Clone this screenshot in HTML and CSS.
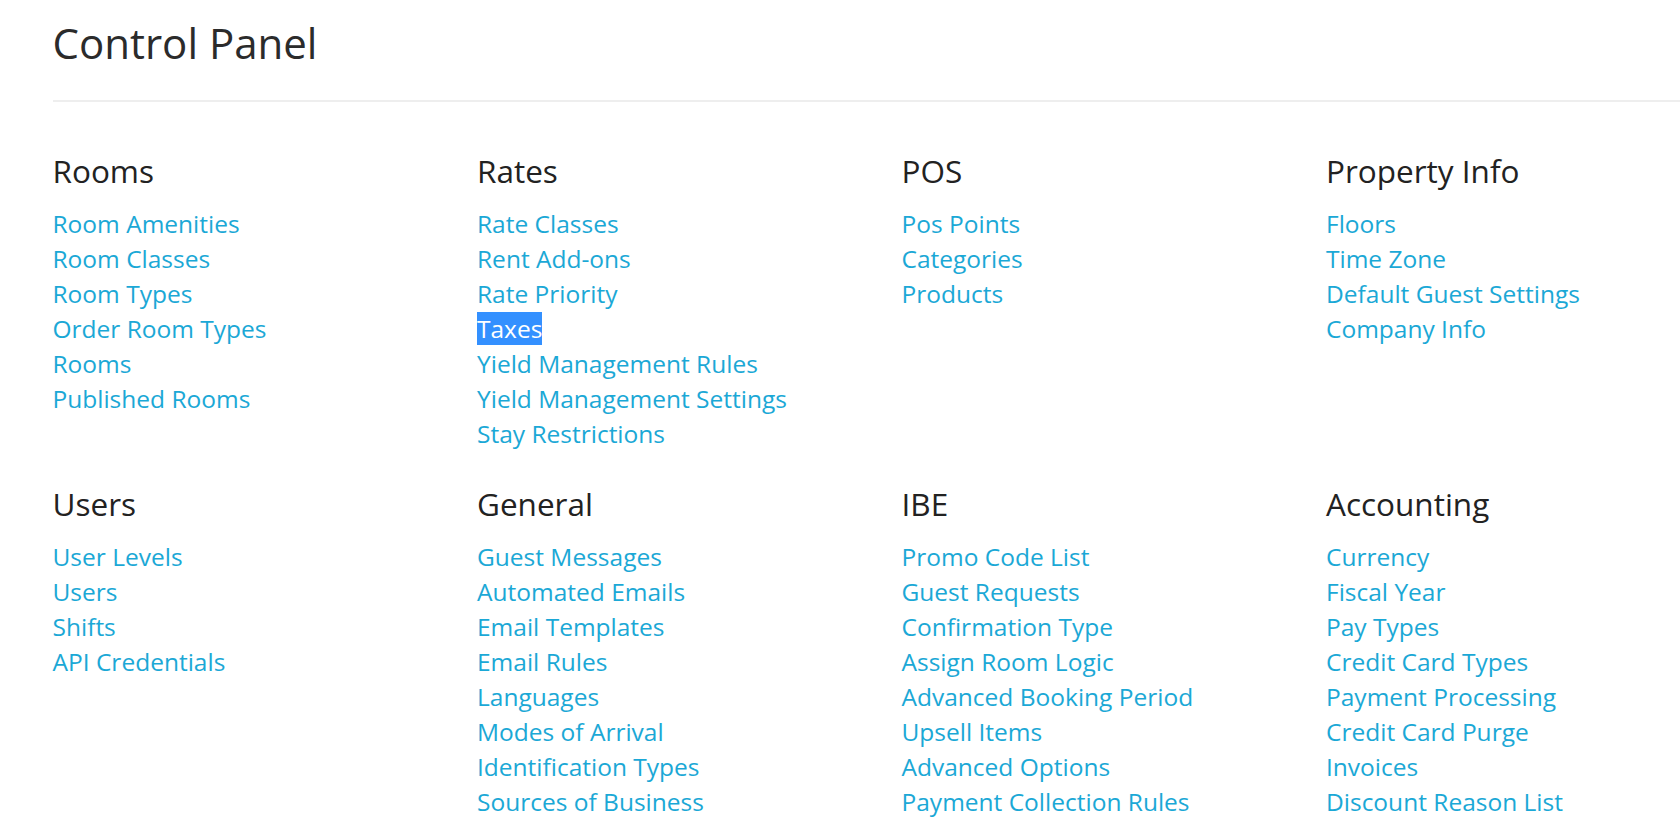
FILE: index.html
```html
<!DOCTYPE html>
<html lang="en">
<head>
<meta charset="utf-8">
<title>Control Panel</title>
<link rel="stylesheet" href="styles.css">
</head>
<body>
<div class="page">
  <h1 class="title">Control Panel</h1>
  <hr class="divider">
  <div class="grid">
    <section class="group">
      <h4 class="group-title">Rooms</h4>
      <ul class="links">
        <li><a href="#">Room Amenities</a></li>
        <li><a href="#">Room Classes</a></li>
        <li><a href="#">Room Types</a></li>
        <li><a href="#">Order Room Types</a></li>
        <li><a href="#">Rooms</a></li>
        <li><a href="#">Published Rooms</a></li>
      </ul>
    </section>
    <section class="group">
      <h4 class="group-title">Rates</h4>
      <ul class="links">
        <li><a href="#">Rate Classes</a></li>
        <li><a href="#">Rent Add-ons</a></li>
        <li><a href="#">Rate Priority</a></li>
        <li><a href="#"><span class="selected">Taxes</span></a></li>
        <li><a href="#">Yield Management Rules</a></li>
        <li><a href="#">Yield Management Settings</a></li>
        <li><a href="#">Stay Restrictions</a></li>
      </ul>
    </section>
    <section class="group">
      <h4 class="group-title">POS</h4>
      <ul class="links">
        <li><a href="#">Pos Points</a></li>
        <li><a href="#">Categories</a></li>
        <li><a href="#">Products</a></li>
      </ul>
    </section>
    <section class="group">
      <h4 class="group-title">Property Info</h4>
      <ul class="links">
        <li><a href="#">Floors</a></li>
        <li><a href="#">Time Zone</a></li>
        <li><a href="#">Default Guest Settings</a></li>
        <li><a href="#">Company Info</a></li>
      </ul>
    </section>
    <section class="group">
      <h4 class="group-title">Users</h4>
      <ul class="links">
        <li><a href="#">User Levels</a></li>
        <li><a href="#">Users</a></li>
        <li><a href="#">Shifts</a></li>
        <li><a href="#">API Credentials</a></li>
      </ul>
    </section>
    <section class="group">
      <h4 class="group-title">General</h4>
      <ul class="links">
        <li><a href="#">Guest Messages</a></li>
        <li><a href="#">Automated Emails</a></li>
        <li><a href="#">Email Templates</a></li>
        <li><a href="#">Email Rules</a></li>
        <li><a href="#">Languages</a></li>
        <li><a href="#">Modes of Arrival</a></li>
        <li><a href="#">Identification Types</a></li>
        <li><a href="#">Sources of Business</a></li>
      </ul>
    </section>
    <section class="group">
      <h4 class="group-title">IBE</h4>
      <ul class="links">
        <li><a href="#">Promo Code List</a></li>
        <li><a href="#">Guest Requests</a></li>
        <li><a href="#">Confirmation Type</a></li>
        <li><a href="#">Assign Room Logic</a></li>
        <li><a href="#">Advanced Booking Period</a></li>
        <li><a href="#">Upsell Items</a></li>
        <li><a href="#">Advanced Options</a></li>
        <li><a href="#">Payment Collection Rules</a></li>
      </ul>
    </section>
    <section class="group">
      <h4 class="group-title">Accounting</h4>
      <ul class="links">
        <li><a href="#">Currency</a></li>
        <li><a href="#">Fiscal Year</a></li>
        <li><a href="#">Pay Types</a></li>
        <li><a href="#">Credit Card Types</a></li>
        <li><a href="#">Payment Processing</a></li>
        <li><a href="#">Credit Card Purge</a></li>
        <li><a href="#">Invoices</a></li>
        <li><a href="#">Discount Reason List</a></li>
      </ul>
    </section>
  </div>
</div>
</body>
</html>
```

FILE: styles.css
```css
html, body {
  margin: 0;
  padding: 0;
  background: #ffffff;
}

body {
  font-family: "Open Sans", "Liberation Sans", sans-serif;
  color: #333333;
  overflow: hidden;
}

.page {
  padding: 19.6px 0 0 52.5px;
}

.title {
  margin: 0;
  font-size: 42px;
  font-weight: 400;
  line-height: 1.1;
  color: #2b2b2b;
}

.divider {
  margin: 34px 0 0 0;
  border: 0;
  border-top: 2px solid #eeeeee;
  height: 0;
}

.grid {
  display: grid;
  grid-template-columns: repeat(4, 424.5px);
  row-gap: 36px;
  padding-top: 52.5px;
}

.group-title {
  margin: 0 0 17px 0;
  font-size: 31.5px;
  font-weight: 400;
  line-height: 1.1;
  color: #222222;
}

.links {
  list-style: none;
  margin: 0;
  padding: 0;
  font-size: 24.5px;
  line-height: 35px;
}

.links a {
  color: #1ba8d6;
  text-decoration: none;
}

.selected {
  background: #3390ff;
  color: #ffffff;
}
```
